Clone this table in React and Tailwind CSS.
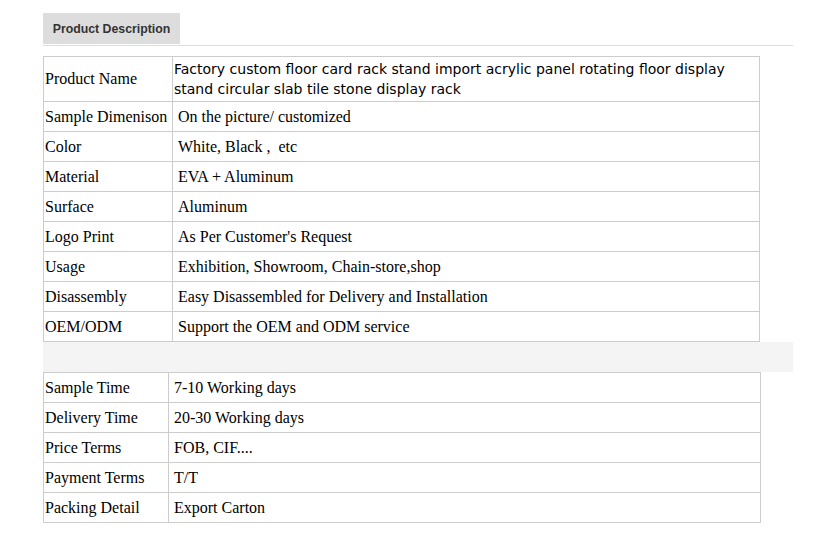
export default function App() {
  const specs = [
    ["Sample Dimenison", "On the picture/ customized"],
    ["Color", "White, Black ,  etc"],
    ["Material", "EVA + Aluminum"],
    ["Surface", "Aluminum"],
    ["Logo Print", "As Per Customer's Request"],
    ["Usage", "Exhibition, Showroom, Chain-store,shop"],
    ["Disassembly", "Easy Disassembled for Delivery and Installation"],
    ["OEM/ODM", "Support the OEM and ODM service"],
  ];
  const terms = [
    ["Sample Time", "7-10 Working days"],
    ["Delivery Time", "20-30 Working days"],
    ["Price Terms", "FOB, CIF...."],
    ["Payment Terms", "T/T"],
    ["Packing Detail", "Export Carton"],
  ];

  return (
    <div className="min-h-screen bg-white pt-[13px] pl-[43px]">
      <div className="w-[750px]">
        {/* tab header */}
        <div className="border-b border-[#dddddd] pb-[1px]">
          <div className="flex h-[31px] w-[137px] items-center justify-center bg-[#dddddd] pt-[2px] font-['Liberation_Sans',Arial,sans-serif] text-[12.3px] font-bold text-[#333333]">
            Product Description
          </div>
        </div>

        <table className="mt-[10px] w-[717px] border-collapse font-['Liberation_Serif','Times_New_Roman',serif] text-[16px] text-black">
          <tbody>
            <tr className="h-[45px]">
              <td className="w-[129px] border border-[#cccccc] px-[1px] align-middle">Product Name</td>
              <td className="border border-[#cccccc] px-[1px] font-['DejaVu_Sans',Verdana,sans-serif] text-[14px] leading-[20px]">
                Factory custom floor card rack stand import acrylic panel rotating floor display stand circular slab tile stone display rack
              </td>
            </tr>
            {specs.map(([k, v]) => (
              <tr key={k} className="h-[30px]">
                <td className="whitespace-nowrap border border-[#cccccc] px-[1px]">{k}</td>
                <td className="whitespace-pre border border-[#cccccc] pl-[5px] pr-[1px]">{v}</td>
              </tr>
            ))}
          </tbody>
        </table>

        <div className="h-[30px] bg-[#f4f4f4]"></div>

        <table className="w-[718px] border-collapse font-['Liberation_Serif','Times_New_Roman',serif] text-[16px] text-black">
          <tbody>
            {terms.map(([k, v]) => (
              <tr key={k} className="h-[30px]">
                <td className="w-[125px] whitespace-nowrap border border-[#cccccc] px-[1px]">{k}</td>
                <td className="border border-[#cccccc] pl-[5px] pr-[1px]">{v}</td>
              </tr>
            ))}
          </tbody>
        </table>
      </div>
    </div>
  );
}
